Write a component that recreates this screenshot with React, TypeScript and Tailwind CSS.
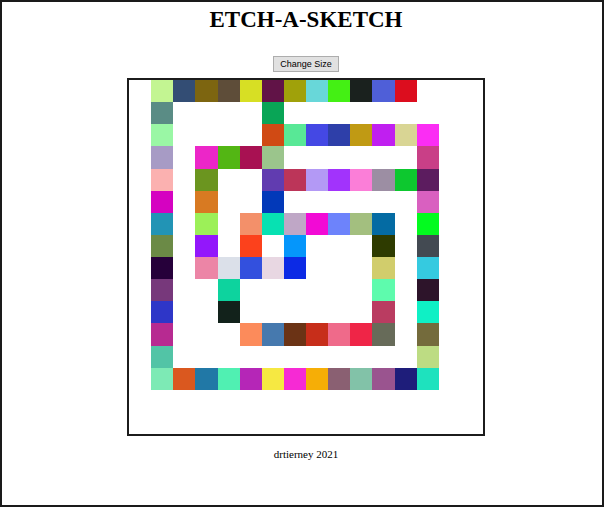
import React from 'react';

// cells that have been drawn on, by row: column -> colour
const painted: Record<number, Record<number, string>> = {
  0: { 1: '#c3f592', 2: '#334d74', 3: '#7d6510', 4: '#5e4d39', 5: '#d7df24', 6: '#611347', 7: '#a0a10a', 8: '#68d7d9', 9: '#44f014', 10: '#1a211e', 11: '#4f5fd8', 12: '#dc0d1e' },
  1: { 1: '#5a8c85', 6: '#09a556' },
  2: { 1: '#9af7a5', 6: '#d04a14', 7: '#58e896', 8: '#4448e4', 9: '#2e3fa9', 10: '#c09a14', 11: '#c01ff0', 12: '#d9d594', 13: '#fb2df4' },
  3: { 1: '#a79bc5', 3: '#ec26c8', 4: '#53b614', 5: '#a81152', 6: '#9bc58c', 13: '#c93f87' },
  4: { 1: '#fbb1b0', 3: '#6b951f', 6: '#613cb0', 7: '#bc3559', 8: '#b399f5', 9: '#a233fc', 10: '#fb7ed8', 11: '#9c8ea3', 12: '#0dc82f', 13: '#5c1c5f' },
  5: { 1: '#d502c1', 3: '#d87a22', 6: '#0239b9', 13: '#d960c0' },
  6: { 1: '#2294b5', 3: '#9cf058', 5: '#f3906a', 6: '#07e1b2', 7: '#bfa7c6', 8: '#f20ad5', 9: '#6d83fb', 10: '#a3bf7f', 11: '#046ba3', 13: '#03fb1f' },
  7: { 1: '#6b8a46', 3: '#9317fb', 5: '#fc411c', 7: '#0596fb', 11: '#2e3b00', 13: '#434a52' },
  8: { 1: '#26003a', 3: '#ec85a6', 4: '#dbe0e9', 5: '#3350de', 6: '#e8d7e2', 7: '#0c2ae5', 11: '#d1cd6c', 13: '#35cae0' },
  9: { 1: '#77387b', 4: '#0dd39e', 11: '#5efbad', 13: '#2d142a' },
  10: { 1: '#2e36c8', 4: '#12221b', 11: '#ba3c61', 13: '#0ff0c5' },
  11: { 1: '#b72a91', 5: '#fc8b5b', 6: '#4679ae', 7: '#6b3315', 8: '#c72e1a', 9: '#ef6a8a', 10: '#ef2547', 11: '#676b59', 13: '#746b3c' },
  12: { 1: '#52c4a6', 13: '#bddc83' },
  13: { 1: '#7deab5', 2: '#da581f', 3: '#2178a6', 4: '#50f0b2', 5: '#b526b7', 6: '#f6e842', 7: '#f62ad4', 8: '#f6ae06', 9: '#8a6072', 10: '#82c2a8', 11: '#9a548f', 12: '#1e1d7a', 13: '#1ee2be' },
};

const SIZE = 16;

const Board = () => (
  <div className="w-[358px] h-[358px] border-2 border-[#1c1c1c] grid grid-cols-[repeat(16,1fr)] grid-rows-[repeat(16,1fr)] bg-white">
    {Array.from({ length: SIZE * SIZE }).map((_, i) => {
      const row = Math.floor(i / SIZE);
      const col = i % SIZE;
      const color = painted[row]?.[col];
      return <div key={i} style={color ? { backgroundColor: color } : undefined} />;
    })}
  </div>
);

export default function App() {
  return (
    <div className="w-[604px] h-[507px] border-2 border-[#1a1a1a] bg-white pl-[8px] flex flex-col items-center" style={{ fontFamily: '"Liberation Serif", "Times New Roman", serif' }}>
      <h1 className="pt-[5px] text-[23px] leading-[26px] font-bold text-black">ETCH-A-SKETCH</h1>
      <button
        className="mt-[23px] h-[16px] px-[6px] border border-[#adadad] bg-[#e1e1e1] text-[9px] leading-none text-black"
        style={{ fontFamily: '"Liberation Sans", Arial, sans-serif' }}
      >
        Change Size
      </button>
      <div className="mt-[6px]">
        <Board />
      </div>
      <p className="mt-[12px] text-[11px] leading-[13px] text-black">drtierney 2021</p>
    </div>
  );
}
